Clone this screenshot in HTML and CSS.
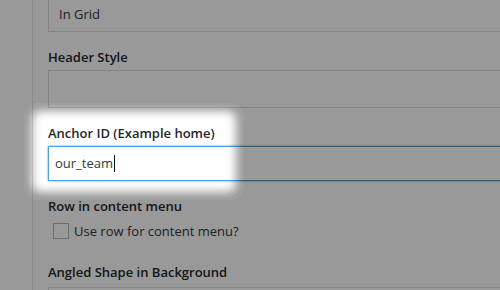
FILE: index.html
```html
<!DOCTYPE html>
<html lang="en">
<head>
    <meta charset="UTF-8">
    <meta name="viewport" content="width=device-width, initial-scale=1.0">
    <title>Row settings</title>
    <link rel="stylesheet" href="styles.css">
</head>
<body>
    <div class="screen">
        <div class="rail"></div>
        <div class="panel">
            <div class="field field-first">
                <div class="input select">In Grid</div>
            </div>
            <div class="field">
                <label class="field-label">Header Style</label>
                <div class="input select tall"></div>
            </div>
            <div class="field">
                <label class="field-label">Anchor ID (Example home)</label>
                <div class="input focus">our_team<span class="caret"></span></div>
            </div>
            <div class="field">
                <label class="field-label">Row in content menu</label>
                <div class="check-row">
                    <span class="checkbox"></span>
                    <span>Use row for content menu?</span>
                </div>
            </div>
            <div class="field">
                <label class="field-label">Angled Shape in Background</label>
                <div class="input select"></div>
            </div>
        </div>
        <!-- dims everything but the anchor field -->
        <div class="spotlight"></div>
    </div>
</body>
</html>
```

FILE: styles.css
```css
body {
    margin: 0;
    background-color: #fff;
    font-family: "Open Sans", "Liberation Sans", Arial, sans-serif;
    font-size: 13px;
    color: #32373c;
}

.screen {
    position: relative;
    display: flex;
    width: 500px;
    height: 290px;
    overflow: hidden;
}

.rail {
    flex: none;
    width: 32px;
    border-right: 1px solid #e4e4e4;
}

.panel {
    flex: none;
    width: 520px;
    padding-left: 15px;
}

.field {
    padding-top: 16px;
}

.field-first {
    margin-top: -4px;
    padding-top: 0;
}

.field-label {
    display: block;
    font-weight: 600;
    line-height: 18px;
    margin-bottom: 4px;
    color: #23282d;
}

.field:last-child .field-label {
    margin-bottom: 6px;
}

.input {
    box-sizing: border-box;
    height: 35px;
    border: 1px solid #ddd;
    background-color: #fff;
    padding: 0 6px;
    line-height: 33px;
    color: #32373c;
}

.select {
    height: 36px;
    padding-left: 10px;
    line-height: 34px;
}

.tall {
    height: 38px;
}

.focus {
    border-color: #5b9dd9;
    box-shadow: 0 0 2px rgba(30, 140, 190, 0.8);
}

.caret {
    display: inline-block;
    width: 1px;
    height: 17px;
    margin-left: 1px;
    vertical-align: -4px;
    background-color: #111;
}

.check-row {
    display: flex;
    align-items: center;
    gap: 5px;
    height: 24px;
    padding-left: 5px;
    margin-bottom: 4px;
}

.checkbox {
    box-sizing: border-box;
    width: 16px;
    height: 16px;
    border: 1px solid #b4b9be;
    background-color: #fff;
}

.spotlight {
    position: absolute;
    left: 24px;
    top: 103px;
    width: 220px;
    height: 97px;
    border-radius: 16px;
    box-shadow: inset 0 0 10px 8px rgba(0, 0, 0, 0.4), 0 0 0 1000px rgba(0, 0, 0, 0.4);
}
```
